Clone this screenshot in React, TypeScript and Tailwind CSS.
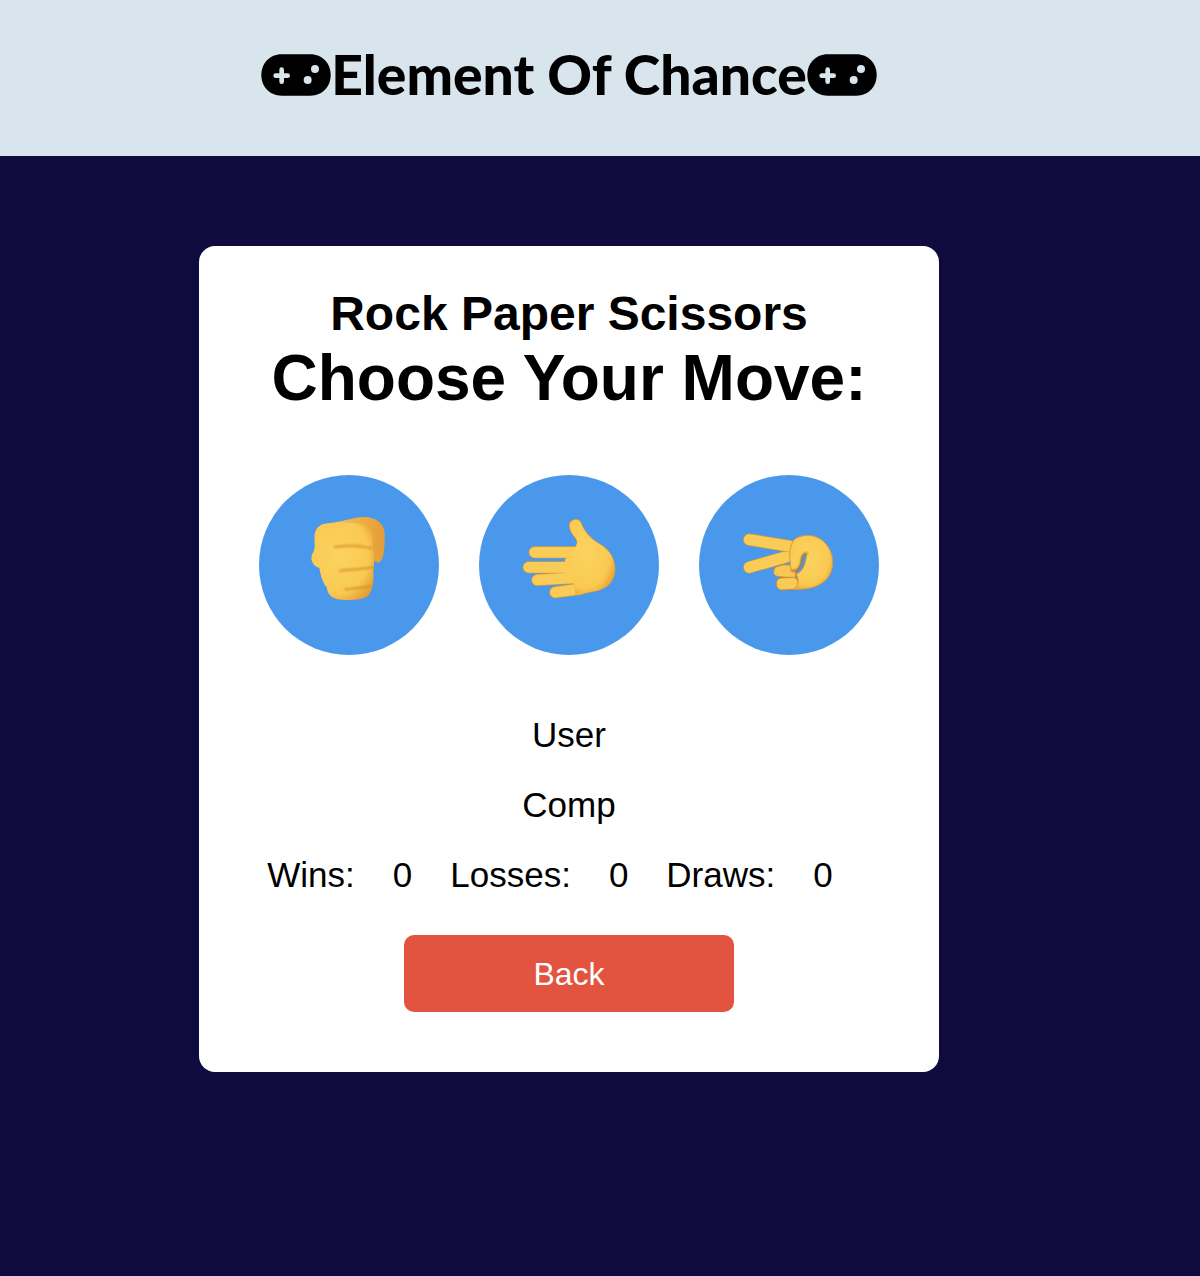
const Pad = () => (
  <svg width="70" height="42" viewBox="0 0 210 126" className="shrink-0">
    <path d="M62 1H148C184 1 209 28 209 63C209 98 184 125 148 125H62C26 125 1 98 1 63C1 28 26 1 62 1Z" fill="#000" />
    <path d="M62 47V83M44 65H80" stroke="#d8e5ec" strokeWidth="14" strokeLinecap="round" fill="none" />
    <circle cx="162" cy="45" r="12" fill="#d8e5ec" />
    <circle cx="140" cy="78" r="12" fill="#d8e5ec" />
  </svg>
);

const Defs = () => (
  <defs>
    <radialGradient id="skin" cx="0.42" cy="0.42" r="0.72">
      <stop offset="0" stopColor="#fbd35f" />
      <stop offset="0.68" stopColor="#f9ca52" />
      <stop offset="1" stopColor="#e2952e" />
    </radialGradient>
    <linearGradient id="dark" x1="0" y1="0" x2="1" y2="0">
      <stop offset="0" stopColor="#f6c353" />
      <stop offset="1" stopColor="#e49c38" />
    </linearGradient>
    <filter id="soft" x="-10%" y="-10%" width="120%" height="120%">
      <feGaussianBlur stdDeviation="2.5" />
    </filter>
  </defs>
);

const Rock = () => (
  <svg width="180" height="180" viewBox="0 0 540 540" className="block">
    <Defs />
    <g transform="translate(93 75)" strokeLinecap="round" fill="none">
      <path d="M130 68C170 62 205 48 235 52C268 58 286 78 284 110C284 145 282 186 264 188C250 188 248 172 244 160L240 100Z" fill="url(#dark)" />
      <path d="M100 72C135 66 190 66 225 74C245 80 250 95 248 130C252 160 254 190 250 215C252 240 248 265 240 280C232 298 205 300 165 300C130 300 114 290 110 262C98 250 92 225 88 204C68 198 58 178 68 160C78 146 72 122 74 102C78 84 88 76 100 72Z" fill="url(#skin)" />
      <g filter="url(#soft)">
        <path d="M134 141C170 136 215 136 246 146" stroke="#cf8a28" strokeWidth="6" opacity="0.8" />
        <path d="M150 212C185 208 220 208 250 202" stroke="#cf8a28" strokeWidth="6" opacity="0.8" />
        <path d="M166 268C190 264 220 264 244 258" stroke="#cf8a28" strokeWidth="6" opacity="0.8" />
      </g>
    </g>
  </svg>
);

const paperPalm =
  "M179 76C179 60 204 52 212 68C222 94 240 116 268 132C300 150 316 180 314 212C312 244 290 266 250 274C230 278 212 282 196 284L192 252L175 218L165 180L190 146C204 136 205 124 196 112C186 102 179 88 179 76Z";

const Paper = () => (
  <svg width="180" height="180" viewBox="0 0 540 540" className="block">
    <Defs />
    <g transform="translate(93 75)" strokeLinecap="round" fill="none">
      <path d={paperPalm} fill="#f9ca52" stroke="#dd9a36" strokeWidth="4" />
      <path d="M74 157H200M56 202H190M82 240L200 233M136 277L210 267" stroke="#dd9a36" strokeWidth="36" />
      <path d="M74 157H200M56 202H190M82 240L200 233M136 277L210 267" stroke="#f9cc58" strokeWidth="32" />
      <path d={paperPalm} fill="url(#skin)" />
    </g>
  </svg>
);

const Scissors = () => (
  <svg width="180" height="180" viewBox="0 0 540 540" className="block">
    <Defs />
    <g transform="translate(93 105)" strokeLinecap="round" fill="none">
      <path d="M58 172L170 140" stroke="#dd9a36" strokeWidth="37" />
      <path d="M58 172L170 140" stroke="#f9cc58" strokeWidth="33" />
      <path d="M58 89L200 112" stroke="#dd9a36" strokeWidth="37" />
      <path d="M58 89L200 112" stroke="#f9cc58" strokeWidth="33" />
      <path d="M136 172C126 186 130 198 146 200L196 204L198 166L160 164Z" fill="#f7c655" stroke="#d08c2a" strokeWidth="3" />
      <path d="M152 204C134 206 134 238 154 240L192 238C208 234 208 206 192 202Z" fill="#f8ca58" stroke="#d08c2a" strokeWidth="3" />
      <path d="M190 92C205 74 250 68 278 92C305 115 314 150 304 184C290 222 250 240 192 238C208 226 206 206 198 192C218 186 226 165 230 135C222 122 212 140 212 158C208 175 195 186 184 182C176 140 178 112 190 92Z" fill="url(#skin)" stroke="#dd9a36" strokeWidth="3" />
      <path d="M232 130C222 126 214 140 214 158C210 176 198 186 186 182" stroke="#b9761f" strokeWidth="7" filter="url(#soft)" opacity="0.8" />
    </g>
  </svg>
);

const Move = ({ children }: { children: React.ReactNode }) => (
  <button className="flex h-[180px] w-[180px] items-center justify-center rounded-full bg-[#4a98ec]">{children}</button>
);

export default function App() {
  return (
    <div className="min-h-[1276px] w-[1200px] bg-[#0f0b3e] font-['Liberation_Sans',Arial,sans-serif] text-black">
      <header className="flex h-[156px] w-[1138px] items-center justify-center bg-[#d8e5ec] pb-[6px] [box-shadow:62px_0_0_#d8e5ec]">
        <Pad />
        <h1 className="font-['Lato',sans-serif] text-[55.2px] font-black leading-none">Element Of Chance</h1>
        <Pad />
      </header>
      <div className="flex w-[1138px] justify-center pt-[90px]">
        <main className="flex h-[826px] w-[740px] flex-col items-center rounded-[16px] bg-white px-[60px] pt-[40px]">
          <h2 className="text-[48px] font-bold leading-[56px]">Rock Paper Scissors</h2>
          <h3 className="-mt-px text-[64px] font-bold leading-[74px]">Choose Your Move:</h3>
          <div className="mt-[60px] flex gap-[40px]">
            <Move><Rock /></Move>
            <Move><Paper /></Move>
            <Move><Scissors /></Move>
          </div>
          <div className="mt-[60px] text-[35px] leading-[40px]">User</div>
          <div className="mt-[30px] text-[35px] leading-[40px]">Comp</div>
          <div className="mt-[30px] flex gap-[38px] pr-[38px] text-[35px] leading-[40px] whitespace-nowrap">
            <span>Wins:</span><span>0</span><span>Losses:</span><span>0</span><span>Draws:</span><span>0</span>
          </div>
          <button className="mt-[40px] h-[77px] w-[330px] rounded-[10px] bg-[#e25440] text-[32px] text-white">Back</button>
        </main>
      </div>
    </div>
  );
}
